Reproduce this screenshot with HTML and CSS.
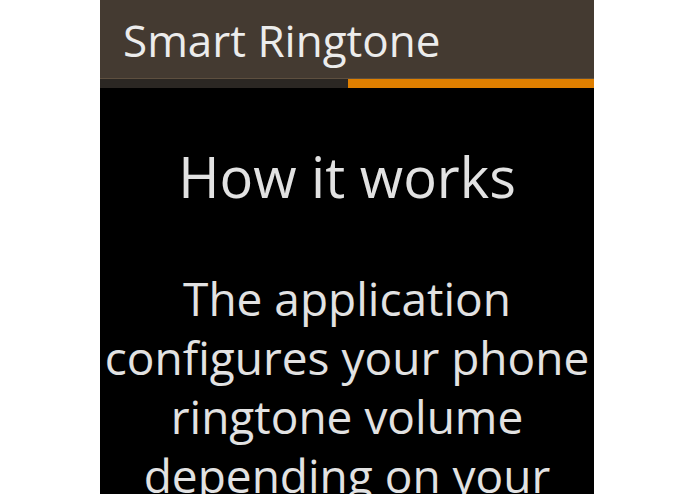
FILE: index.html
```html
<!DOCTYPE html>
<html lang="en">
<head>
    <meta charset="UTF-8">
    <meta name="viewport" content="width=device-width, initial-scale=1.0">
    <title>Smart Ringtone</title>
    <link rel="stylesheet" href="styles.css">
</head>
<body>
    <div class="screen">
        <div class="app-bar">
            <h1>Smart Ringtone</h1>
        </div>
        <div class="progress">
            <div class="progress-done"></div>
            <div class="progress-left"></div>
        </div>
        <div class="content">
            <h2>How it works</h2>
            <p>The application configures your phone ringtone volume depending on your location</p>
        </div>
    </div>
</body>
</html>
```

FILE: styles.css
```css
body {
    margin: 0;
    background: #fff;
    font-family: "Open Sans", "Noto Sans", sans-serif;
}
.screen {
    width: 494px;
    height: 494px;
    margin-left: 100px;
    background: #000;
    overflow: hidden;
    color: #e2e2e2;
}
.app-bar {
    height: 68px;
    padding: 10px 0 0 23px;
    background: #443a31;
    border-bottom: 1px solid #5e4f3f;
}
.app-bar h1 {
    margin: 0;
    font-size: 44px;
    font-weight: 500;
    line-height: 60px;
    color: #ececec;
}
.progress {
    display: flex;
    height: 9px;
}
.progress-done {
    width: 248px;
    background: #2b2723;
}
.progress-left {
    flex: 1;
    background: #df7f00;
}
.content {
    text-align: center;
    padding-top: 58px;
}
.content h2 {
    margin: 0 0 63px;
    font-size: 56px;
    font-weight: 400;
    line-height: 60px;
}
.content p {
    margin: 0;
    font-size: 46px;
    line-height: 59px;
}
```
